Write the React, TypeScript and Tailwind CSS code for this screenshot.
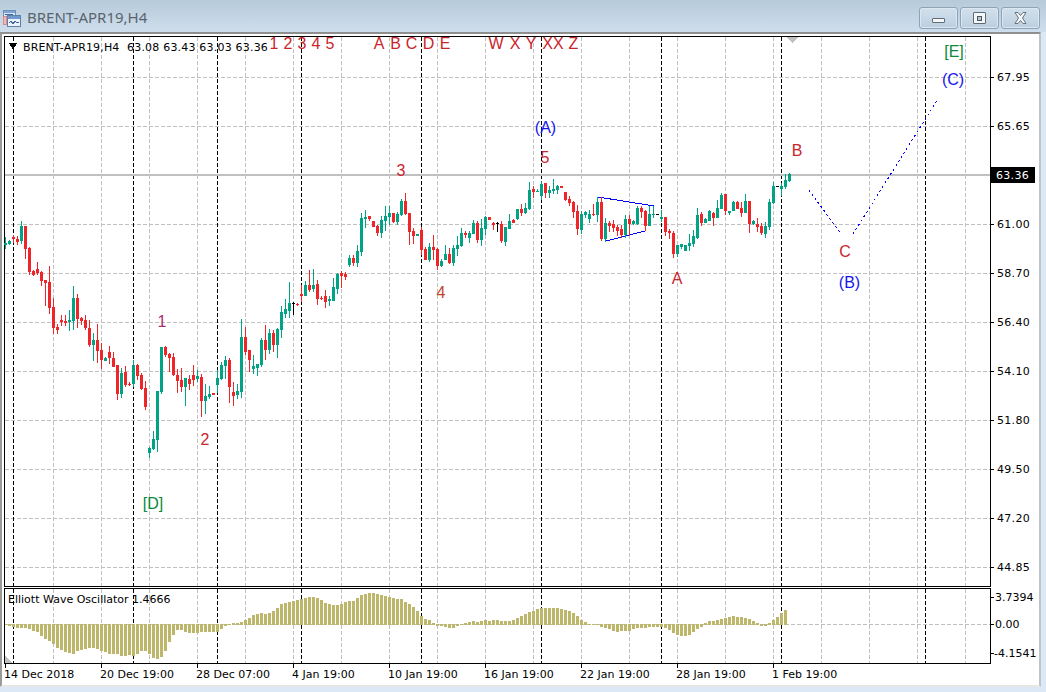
import React from "react"

type Candle = ["g" | "r" | "k", number, number, number, number]

// y values are in thirds of a pixel: [colour, high, low, body top, body bottom]
const firstLeg: Candle[] = [
  ["g",110,147,130,135],["g",120,135,122,132],["r",105,130,110,117],["r",108,135,117,126],["g",63,132,78,123],
  ["r",78,177,78,146],["r",141,225,144,215],["r",210,228,213,225],["r",186,225,208,220],["r",213,258,216,243],
  ["r",240,318,240,248],["r",198,342,246,323],["r",295,402,321,383],["r",372,402,381,390],["r",345,378,360,367],
  ["r",345,378,363,369],["g",330,393,360,366],["g",258,390,294,362],["r",282,384,294,357],["r",350,375,354,362],
  ["r",345,390,360,384],["r",360,440,384,435],["g",399,483,420,435],["r",372,489,420,453],["r",429,507,450,480],
  ["g",471,483,474,483],["r",438,492,456,474],["r",456,501,474,501],["r",495,600,495,582],["g",504,594,519,582],
  ["r",498,561,516,555],["r",546,558,552,555],["g",480,561,495,552],["r",492,540,495,528],["r",519,570,525,567],
  ["r",543,630,564,621],["g",741,774,744,759],["g",693,750,717,747],["g",573,756,573,720],["g",441,582,441,576],
  ["r",438,471,441,465],["r",459,516,462,474],["r",459,528,471,525],["r",507,579,525,543],["r",504,576,540,561],
  ["g",534,618,534,561],["r",525,570,537,552],["r",495,558,525,540],["g",510,546,528,537],["r",522,651,531,603],
  ["g",552,642,588,603],["g",558,597,582,591],["r",579,585,579,585],["g",510,579,534,555],["g",486,540,495,537],
  ["g",468,537,480,498],["r",474,609,480,561],["r",546,618,576,588],["g",552,597,573,585],["g",357,594,411,576],
  ["r",381,465,411,456],["r",450,516,450,480],["g",465,522,498,507],["g",492,528,492,504],["g",414,501,420,495],
  ["r",375,480,420,450],
]

const secondLeg: Candle[] = [
  ["g",477,552,489,540],["r",480,546,489,525],["g",474,564,477,525],["g",408,504,426,480],["g",387,444,417,432],
  ["g",336,444,399,423],["k",396,435,399,402],["r",399,408,402,405],["r",345,396,372,378],["g",333,378,345,378],
  ["r",300,366,345,360],["g",297,366,345,357],["r",330,405,342,387],["r",378,390,384,387],["r",360,414,378,396],
  ["g",378,408,387,393],["g",324,393,351,393],["g",309,372,312,357],["r",303,354,309,318],["r",306,330,312,321],
  ["g",255,291,264,285],["r",255,288,264,279],["g",225,291,243,279],["g",129,258,144,246],["g",120,174,141,147],
  ["r",138,153,138,147],["r",153,171,153,171],["r",165,198,168,189],["g",138,204,150,189],["g",108,183,138,153],
  ["g",108,165,129,141],["r",129,159,129,156],["g",126,165,132,156],["g",87,138,93,135],["r",69,135,93,132],
  ["r",129,225,129,186],["r",174,222,183,198],["g",192,198,192,198],["r",171,255,180,240],["r",231,270,237,270],
  ["g",219,276,231,270],["r",195,270,231,240],["r",234,300,237,288],["g",267,291,273,288],["g",225,270,252,270],
  ["r",234,282,252,279],["g",225,288,234,279],["g",198,258,225,237],["g",174,231,189,228],["r",183,204,189,195],
  ["g",183,219,189,204],["g",150,192,159,192],["r",153,219,159,210],["g",147,228,174,210],["g",138,195,141,177],
  ["r",141,150,141,150],["r",156,180,159,165],["k",156,186,159,162],["r",153,219,162,213],["g",171,228,171,216],
  ["g",132,177,153,177],["r",147,159,150,159],["g",117,150,117,147],["r",102,138,117,129],["g",99,132,114,129],
  ["g",36,120,60,117],["r",48,84,57,66],["g",57,66,62,66],
  ["g",33,90,42,78],["r",39,84,39,69],["g",48,84,60,69],["g",27,72,57,63],["g",45,72,48,60],
  ["r",48,54,48,54],["r",66,93,66,90],["r",78,108,87,99],["r",93,144,96,126],["r",105,195,123,177],
  ["g",123,192,132,180],["g",123,144,126,135],["g",120,159,132,147],["r",102,138,132,135],["g",81,156,96,135],
  ["r",81,213,96,207],["g",144,216,159,207],["r",153,186,159,168],["r",150,186,162,174],["r",165,198,171,184],
  ["r",165,204,177,195],["g",135,204,147,195],["r",135,198,147,162],["g",150,165,153,162],["g",108,165,114,162],
  ["r",108,144,114,126],["r",120,183,123,168],["g",108,168,132,168],["g",108,144,132,135],["k",132,135,132,135],
  ["g",120,156,141,147],["r",141,198,141,186],["r",177,207,183,189],["r",183,264,189,252],["g",225,261,225,252],
  ["g",222,237,222,231],["g",225,243,225,243],["g",192,243,219,228],["g",180,231,198,222],["g",114,207,135,204],
  ["r",126,168,132,159],["g",144,159,147,159],["g",120,153,123,153],["r",126,168,129,144],["g",90,144,114,144],
  ["g",69,117,75,117],["r",72,135,72,123],["g",123,135,123,129],["g",93,123,96,123],["r",93,117,96,117],
  ["r",96,141,114,129],["g",72,129,93,129],["r",93,189,93,162],["g",150,165,153,162],["r",144,186,162,171],
  ["r",159,195,168,189],["g",156,204,168,192],["g",87,180,96,171],["g",36,102,48,99],["k",48,51,48,51],
  ["g",39,78,48,57],["g",12,57,30,51],["g",9,36,12,33],
]

// oscillator bar ends, also in thirds of a pixel
const oscLeft = [
  136,139,142,144,144,144,147,153,156,168,177,183,192,204,210,216,219,222,213,210,207,204,204,207,213,216,222,222,222,228,
  228,225,228,222,213,213,222,234,237,231,213,186,165,150,150,156,159,159,159,156,156,156,156,156,147,138,136,130,130,127,
  120,113,104,102,99,102,99,93,84,72,69,66,63,60,57,54,51,51,54,60,69,72,75,75,72,66,63,63,54,45,
  42,39,39,42,45,48,51,54,57,
]
const oscRight = [
  12,21,27,36,48,63,72,75,84,93,93,96,99,99,93,90,85,81,78,81,78,75,78,75,75,78,78,78,75,69,
  63,57,51,48,42,39,39,39,39,39,42,45,48,54,63,75,82,88,90,90,96,99,102,108,111,108,108,108,102,99,
  99,99,96,96,96,96,99,105,114,120,123,123,120,111,102,96,84,78,78,75,72,69,66,63,66,66,69,72,78,85,
  93,93,85,75,66,54,45,
]

const candles = [
  ...firstLeg.map((c) => ({ c, base: 200 })),
  ...secondLeg.map((c) => ({ c, base: 170 })),
]
const oscBars = [...oscLeft.map((v) => 580 + v / 3), ...oscRight.map((v) => 595 + v / 3)]

const grayX = Array.from({ length: 20 }, (_, i) => 53.5 + i * 48)
const blackX = [13.5, 133.5, 217.5, 301.5, 421.5, 541.5, 661.5, 781.5, 925.5]
const priceRows = ["67.95", "65.65", "", "61.00", "58.70", "56.40", "54.10", "51.80", "49.50", "47.20", "44.85"]
const times = [
  "14 Dec 2018", "20 Dec 19:00", "28 Dec 07:00", "4 Jan 19:00", "10 Jan 19:00",
  "16 Jan 19:00", "22 Jan 19:00", "28 Jan 19:00", "1 Feb 19:00",
]

const RED = "#c9252d"
const BLUE = "#1414f0"
const GREEN = "#0a8a3a"
const marks: [string, number, number, string][] = [
  ["1", 274, 43, RED], ["2", 288, 43, RED], ["3", 302, 43, RED], ["4", 316, 43, RED], ["5", 330, 43, RED],
  ["A", 379, 43, RED], ["B", 395.5, 43, RED], ["C", 411.5, 43, RED], ["D", 428.5, 43, RED], ["E", 445, 43, RED],
  ["W", 496, 43, RED], ["X", 515, 43, RED], ["Y", 531, 43, RED], ["XX", 553, 43, RED], ["Z", 573.5, 43, RED],
  ["1", 162, 321, "#a8306e"], ["2", 205, 439, RED], ["3", 401, 170, RED], ["4", 441, 292, "#c2452a"], ["5", 545, 157, RED],
  ["A", 677, 278, RED], ["B", 797, 150, RED], ["C", 845, 251, RED],
  ["(A)", 545.5, 127, BLUE], ["(B)", 849.5, 282, BLUE], ["(C)", 953, 79, BLUE],
  ["[D]", 153, 503, GREEN], ["[E]", 954, 51, GREEN],
]

const candleFill = { g: "#00a383", r: "#f02529", k: "#000000" }

const GridLines = ({ top, bottom }: { top: number; bottom: number }) => (
  <>
    {grayX.map((x) => (
      <line key={x} x1={x} x2={x} y1={top} y2={bottom} stroke="#c0c0c0" strokeDasharray="4 2" />
    ))}
    {blackX.map((x) => (
      <line key={x} x1={x} x2={x} y1={top} y2={bottom} stroke="#000000" strokeDasharray="4 2" />
    ))}
  </>
)

const MainChart = () => (
  <svg className="block overflow-visible" width={985} height={549} viewBox="5 37 985 549" shapeRendering="crispEdges">
    {Array.from({ length: 11 }, (_, i) => 77.5 + i * 49).map((y) => (
      <line key={y} x1={5} x2={990} y1={y} y2={y} stroke="#c0c0c0" strokeDasharray="4 2" />
    ))}
    <GridLines top={37} bottom={586} />
    <line x1={5} x2={990} y1={175} y2={175} stroke="#c0c0c0" strokeWidth={2} />
    <line x1={598} y1={197} x2={654} y2={206} stroke="#0000ff" />
    <line x1={606} y1={241} x2={645} y2={231} stroke="#0000ff" />
    <polyline points="809,190 841,234" fill="none" stroke="#0000ff" strokeDasharray="2 3" />
    <polyline points="853,234 938,99" fill="none" stroke="#0000ff" strokeDasharray="2 3" />
    {candles.map(({ c: [color, hi, lo, top, bot], base }, k) => {
      const yTop = Math.round(base + top / 3)
      const yBot = Math.round(base + bot / 3)
      const yHi = Math.round(base + hi / 3)
      const yLo = Math.round(base + lo / 3)
      return (
        <g key={k} fill={candleFill[color]}>
          <rect x={5 + 4 * k} y={yHi} width={1} height={Math.max(1, yLo - yHi)} />
          <rect x={4 + 4 * k} y={yTop} width={3} height={Math.max(1, yBot - yTop)} />
        </g>
      )
    })}
    <polygon points="9,43 17,43 13,50" fill="#000000" />
    <polygon points="787,37 798,37 792.5,43" fill="#c0c0c0" />
    {marks.map(([label, x, y, color]) => (
      <text
        key={label + x}
        x={x}
        y={y + 5.5}
        textAnchor="middle"
        fill={color}
        className="font-['Liberation_Sans',sans-serif] text-[16px]"
      >
        {label}
      </text>
    ))}
  </svg>
)

const OscChart = () => (
  <svg className="block" width={985} height={74} viewBox="5 589 985 74" shapeRendering="crispEdges">
    <GridLines top={589} bottom={663} />
    <line x1={5} x2={990} y1={624.5} y2={624.5} stroke="#c0c0c0" strokeDasharray="4 2" />
    {oscBars.map((y, k) => {
      const end = Math.round(y)
      const top = Math.min(end, 624)
      return <rect key={k} x={4 + 4 * k} y={top} width={3} height={Math.max(1, Math.max(end, 625) - top)} fill="#bdb76b" />
    })}
    <polygon points="5,656 5,663 12,663" fill="#c0c0c0" />
  </svg>
)

const WinButton = ({ children }: { children: React.ReactNode }) => (
  <div className="flex h-[22px] w-[39px] items-center justify-center rounded-[3px] border border-[#8ea3b6] bg-gradient-to-b from-[#d2e0ec] to-[#bccfdf] shadow-[inset_0_0_0_1px_#dbe7f1]">
    {children}
  </div>
)

const AppIcon = () => (
  <svg width={18} height={18} viewBox="0 0 18 18" shapeRendering="crispEdges">
    <rect x={0.5} y={1.5} width={12} height={10} fill="#d8e6f6" stroke="#6f8fb8" />
    <rect x={1} y={2} width={11} height={2} fill="#7fa6d6" />
    <rect x={0.5} y={7.5} width={3} height={8} fill="#f2b7b7" stroke="#d88a8a" />
    <rect x={4.5} y={6.5} width={13} height={11} fill="#eaf2fb" stroke="#5f82ad" />
    <rect x={5} y={7} width={12} height={3} fill="#6e9ad0" />
    <polyline points="6,14 8,12 10,15 12,12 14,14 16,13" fill="none" stroke="#3e6aa0" />
    <polyline points="2,6 4,5 6,6 8,5 10,6" fill="none" stroke="#3e6aa0" />
  </svg>
)

export default function App() {
  return (
    <div className="flex h-[692px] w-[1046px] flex-col overflow-hidden bg-[#dce8f5] font-['DejaVu_Sans',sans-serif] text-[11px] leading-none text-black">
      {/* title bar */}
      <div className="flex h-[32px] shrink-0 items-start justify-between bg-gradient-to-b from-[#b6cad9] to-[#cfdeed] pl-[3px] pr-[6px]">
        <div className="flex h-[35px] items-center gap-[6px]">
          <AppIcon />
          <span className="font-['Noto_Sans',sans-serif] text-[15px] text-[#5a646e]">BRENT-APR19,H4</span>
        </div>
        <div className="mt-[7px] flex gap-[2px]">
          <WinButton>
            <div className="mt-[5px] h-[5px] w-[13px] rounded-[1px] border border-[#5f6b76] bg-[#f4f6f8]" />
          </WinButton>
          <WinButton>
            <div className="flex h-[12px] w-[13px] items-center justify-center rounded-[1px] border border-[#5f6b76] bg-[#f4f6f8]">
              <div className="h-[5px] w-[5px] border border-[#4b5660] bg-[#bcc6ce]" />
            </div>
          </WinButton>
          <WinButton>
            <svg width={15} height={14} viewBox="0 0 15 14">
              <path d="M2 1.5 L5 1.5 L7.5 4.5 L10 1.5 L13 1.5 L9.5 7 L13 12.5 L10 12.5 L7.5 9.5 L5 12.5 L2 12.5 L5.5 7 Z" fill="#f4f6f8" stroke="#66727d" />
            </svg>
          </WinButton>
        </div>
      </div>

      {/* client area */}
      <div className="mr-[5px] mb-[5px] flex min-h-0 flex-1 flex-col border-t-2 border-r-2 border-b-2 border-l-2 border-t-[#8f8f8f] border-r-[#bfc4c8] border-b-[#e6e6e6] border-l-[#9a9a9a] bg-white pt-[2px] pl-[2px]">
        <div className="flex h-[551px] shrink-0">
          <div className="relative h-[551px] w-[987px] shrink-0 border border-black">
            <MainChart />
            <div className="absolute top-[5px] left-[18px] flex whitespace-pre">
              <span className="w-[104px] tracking-[0.15px]">BRENT-APR19,H4</span>
              <span className="tracking-[0.2px]">63.08 63.43 63.03 63.36</span>
            </div>
          </div>
          <div className="relative flex-1 pt-[17px] tracking-[0.3px]">
            {priceRows.map((p, i) => (
              <div key={i} className="flex h-[49px] items-center">
                <div className="h-px w-[3px] bg-black" />
                <span className="ml-[3px]">{p}</span>
              </div>
            ))}
            <div className="absolute top-[131px] left-0 flex h-[16px] w-[44px] items-center bg-black pl-[5px] text-white">63.36</div>
          </div>
        </div>
        <div className="mt-px flex h-[76px] shrink-0">
          <div className="relative h-[76px] w-[987px] shrink-0 border border-black">
            <OscChart />
            <div className="absolute top-[5px] left-[3px]">Elliott Wave Oscillator 1.4666</div>
          </div>
          <div className="flex flex-1 flex-col pt-px">
            <div className="flex h-[18px] items-center">
              <div className="h-px w-[3px] bg-black" />
              <span className="ml-[1px]">3.7394</span>
            </div>
            <div className="flex h-[36px] items-center">
              <div className="h-px w-[3px] bg-black" />
              <span className="ml-[1px]">0.00</span>
            </div>
            <div className="flex h-[22px] items-center">
              <div className="h-px w-[3px] bg-black" />
              <span>-4.1541</span>
            </div>
          </div>
        </div>
        <div className="flex">
          {times.map((t) => (
            <div key={t} className="w-[96px] shrink-0">
              <div className="ml-px h-[4px] w-px bg-black" />
              <div className="mt-px whitespace-nowrap">{t}</div>
            </div>
          ))}
        </div>
      </div>
    </div>
  )
}
